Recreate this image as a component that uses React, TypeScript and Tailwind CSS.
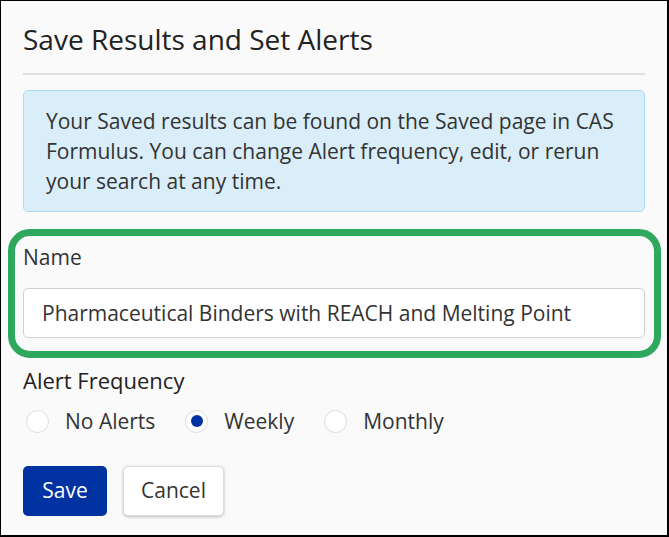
import { useState } from "react"

const FREQUENCIES = ["No Alerts", "Weekly", "Monthly"]

function Radio({ label, checked, onSelect }: { label: string; checked: boolean; onSelect: () => void }) {
  return (
    <label className="flex items-center cursor-pointer" onClick={onSelect}>
      <span className="ml-[3px] flex h-[23px] w-[23px] items-center justify-center rounded-full border border-[#dcdcdc] bg-white">
        {checked && <span className="h-[12px] w-[12px] rounded-full bg-[#0033a1]" />}
      </span>
      <span className="ml-[16px] text-[21px] leading-[30px] text-[#333]">{label}</span>
    </label>
  )
}

export default function App() {
  const [frequency, setFrequency] = useState("Weekly")
  const [name, setName] = useState("Pharmaceutical Binders with REACH and Melting Point")

  return (
    <div className="h-[537px] w-[669px] border border-r-2 border-b-2 border-black bg-[#fafafa] px-[22px] pt-[20px] font-['Open_Sans',sans-serif] text-[#333]">
      <h2 className="text-[28px] leading-[36px] font-medium text-[#222]">Save Results and Set Alerts</h2>
      <div className="mt-[16px] h-[2px] bg-[#dfdfdf]" />

      {/* Info notice */}
      <div className="mt-[15px] rounded-[5px] border border-[#a9dcf2] bg-[#d9eef9] px-[22px] py-[15px] text-[21px] leading-[30px] text-[#333]">
        Your Saved results can be found on the Saved page in CAS Formulus. You can change Alert frequency, edit, or
        rerun your search at any time.
      </div>

      {/* Name field, with highlight drawn over it */}
      <div className="relative mt-[30px]">
        <div className="pointer-events-none absolute -top-[13px] -right-[16px] -bottom-[20px] -left-[15px] rounded-[22px] border-[7px] border-[#2ea85c]" />
        <label className="block text-[21px] leading-[30px] text-[#333]">Name</label>
        <input
          value={name}
          onChange={(e) => setName(e.target.value)}
          className="mt-[16px] block h-[50px] w-full rounded-[5px] border border-[#d0d0d0] bg-white px-[18px] text-[21px] text-[#333] outline-none"
        />
      </div>

      <div className="mt-[27px] text-[22px] leading-[30px] font-medium text-[#222]">Alert Frequency</div>
      <div className="mt-[11px] flex gap-[27px]">
        {FREQUENCIES.map((f) => (
          <Radio key={f} label={f} checked={frequency === f} onSelect={() => setFrequency(f)} />
        ))}
      </div>

      <div className="mt-[30px] flex gap-[16px]">
        <button className="h-[50px] w-[84px] rounded-[5px] bg-[#0033a1] text-[21px] text-white">Save</button>
        <button className="h-[50px] w-[101px] rounded-[5px] border border-[#dcdcdc] bg-white text-[21px] text-[#333] shadow-[0_1px_3px_rgba(0,0,0,0.25)]">
          Cancel
        </button>
      </div>
    </div>
  )
}
